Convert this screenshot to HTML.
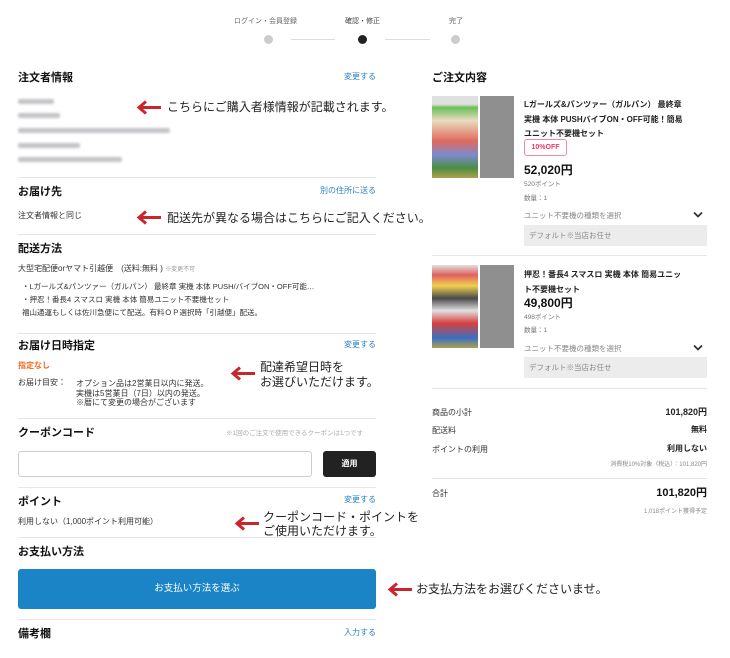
<!DOCTYPE html>
<html><head><meta charset="utf-8"><style>
*{margin:0;padding:0;box-sizing:border-box}
body{width:730px;height:658px;background:#fff;position:relative;overflow:hidden;font-family:"Liberation Sans","Noto Sans CJK JP",sans-serif;color:#222}
.t{position:absolute;white-space:nowrap;line-height:1}
.h{font-size:11px;font-weight:bold;color:#111}
.s{font-size:8px;color:#333}
.lk{font-size:8px;color:#2a80c4}
.r{text-align:right}
.hr{position:absolute;height:1px;background:#e6e6e6}
.ann{font-size:12px;color:#222;letter-spacing:0}
.blur{position:absolute;height:5px;background:#c4c4c8;filter:blur(1.2px);border-radius:2px}
.box{position:absolute;background:#ececec}
</style></head><body>
<div class="t" style="left:234px;top:18px;font-size:7px;color:#666">ログイン・会員登録</div>
<div class="t" style="left:345px;top:18px;font-size:7px;color:#444">確認・修正</div>
<div class="t" style="left:449px;top:18px;font-size:7px;color:#666">完了</div>
<div style="position:absolute;left:264px;top:35px;width:9px;height:9px;border-radius:50%;background:#ccc"></div>
<div style="position:absolute;left:358px;top:35px;width:9px;height:9px;border-radius:50%;background:#222"></div>
<div style="position:absolute;left:451px;top:35px;width:9px;height:9px;border-radius:50%;background:#ccc"></div>
<div class="hr" style="left:291px;top:39px;width:44px;background:#ddd"></div>
<div class="hr" style="left:385px;top:39px;width:45px;background:#ddd"></div>

<div class="t h" style="left:18px;top:73px">注文者情報</div>
<div class="t lk" style="left:344px;top:73px">変更する</div>
<div class="blur" style="left:18px;top:99px;width:36px"></div>
<div class="blur" style="left:18px;top:113px;width:42px"></div>
<div class="blur" style="left:18px;top:128px;width:152px"></div>
<div class="blur" style="left:18px;top:143px;width:62px"></div>
<div class="blur" style="left:18px;top:157px;width:104px"></div>

<svg style="position:absolute;left:136px;top:100px" width="26" height="15"><path d="M25 7.5H4M10 1.5L3 7.5L10 13.5" stroke="#c8262c" stroke-width="3" fill="none"/></svg>
<div class="t ann" style="left:167px;top:101px">こちらにご購入者様情報が記載されます。</div>

<div class="hr" style="left:18px;top:177px;width:358px"></div>
<div class="t h" style="left:18px;top:187px">お届け先</div>
<div class="t lk" style="left:320px;top:187px">別の住所に送る</div>
<div class="t s" style="left:18px;top:212px">注文者情報と同じ</div>
<svg style="position:absolute;left:136px;top:210px" width="26" height="15"><path d="M25 7.5H4M10 1.5L3 7.5L10 13.5" stroke="#c8262c" stroke-width="3" fill="none"/></svg>
<div class="t ann" style="left:167px;top:212px">配送先が異なる場合はこちらにご記入ください。</div>

<div class="hr" style="left:18px;top:234px;width:358px"></div>
<div class="t h" style="left:18px;top:244px">配送方法</div>
<div class="t s" style="left:18px;top:265px">大型宅配便orヤマト引越便　(送料:無料 ) <span style="font-size:6px;color:#999">※変更不可</span></div>
<div class="t" style="left:22px;top:283px;font-size:7.5px;color:#333">・Lガールズ&amp;パンツァー（ガルパン） 最終章 実機 本体 PUSH/バイブON・OFF可能…</div>
<div class="t" style="left:22px;top:296px;font-size:7.5px;color:#333">・押忍！番長4 スマスロ 実機 本体 簡易ユニット不要機セット</div>
<div class="t" style="left:22px;top:309px;font-size:7.5px;color:#333">福山通運もしくは佐川急便にて配送。有料ＯＰ選択時「引越便」配送。</div>

<div class="hr" style="left:18px;top:333px;width:358px"></div>
<div class="t h" style="left:18px;top:341px">お届け日時指定</div>
<div class="t lk" style="left:344px;top:341px">変更する</div>
<div class="t" style="left:18px;top:362px;font-size:8px;color:#f06a1e;font-weight:bold">指定なし</div>
<div class="t s" style="left:18px;top:379px">お届け目安：</div>
<div class="t s" style="left:76px;top:379px;line-height:9.5px">オプション品は2営業日以内に発送。<br>実機は5営業日（7日）以内の発送。<br>※暦にて変更の場合がございます</div>
<svg style="position:absolute;left:230px;top:366px" width="26" height="15"><path d="M25 7.5H4M10 1.5L3 7.5L10 13.5" stroke="#c8262c" stroke-width="3" fill="none"/></svg>
<div class="t ann" style="left:260px;top:360px;line-height:15px">配達希望日時を<br>お選びいただけます。</div>

<div class="hr" style="left:18px;top:418px;width:358px"></div>
<div class="t h" style="left:18px;top:428px">クーポンコード</div>
<div class="t" style="left:226px;top:431px;font-size:6.5px;color:#aaa">※1回のご注文で使用できるクーポンは1つです</div>
<div style="position:absolute;left:18px;top:451px;width:294px;height:26px;border:1px solid #ccc;border-radius:3px"></div>
<div style="position:absolute;left:323px;top:451px;width:53px;height:26px;background:#222;border-radius:3px;color:#fff;font-size:8px;font-weight:bold;text-align:center;line-height:26px">適用</div>

<div class="hr" style="left:18px;top:487px;width:358px"></div>
<div class="t h" style="left:18px;top:497px">ポイント</div>
<div class="t lk" style="left:344px;top:496px">変更する</div>
<div class="t s" style="left:18px;top:518px">利用しない（1,000ポイント利用可能）</div>
<svg style="position:absolute;left:234px;top:516px" width="26" height="15"><path d="M25 7.5H4M10 1.5L3 7.5L10 13.5" stroke="#c8262c" stroke-width="3" fill="none"/></svg>
<div class="t ann" style="left:263px;top:510px;line-height:14px">クーポンコード・ポイントを<br>ご使用いただけます。</div>

<div class="hr" style="left:18px;top:537px;width:358px"></div>
<div class="t h" style="left:18px;top:547px">お支払い方法</div>
<div style="position:absolute;left:18px;top:569px;width:358px;height:40px;background:#1a84c6;border-radius:3px;color:#fff;font-size:9.5px;text-align:center;line-height:40px">お支払い方法を選ぶ</div>
<svg style="position:absolute;left:387px;top:582px" width="26" height="15"><path d="M25 7.5H4M10 1.5L3 7.5L10 13.5" stroke="#c8262c" stroke-width="3" fill="none"/></svg>
<div class="t ann" style="left:416px;top:583px">お支払方法をお選びくださいませ。</div>

<div class="hr" style="left:18px;top:619px;width:358px"></div>
<div class="t h" style="left:18px;top:629px">備考欄</div>
<div class="t lk" style="left:344px;top:629px">入力する</div>

<div class="t h" style="left:432px;top:73px">ご注文内容</div>

<div style="position:absolute;left:432px;top:96px;width:46px;height:82px;background:linear-gradient(#e0e0e0 0,#e0e0e0 10%,#6bbf5a 14%,#e8dcc0 30%,#e06a5c 55%,#7c8bd0 72%,#4a8d40 88%,#b0a050 100%)"></div>
<div style="position:absolute;left:480px;top:96px;width:34px;height:82px;background:#8f8f8f"></div>
<div class="t" style="left:524px;top:98px;font-size:8px;font-weight:bold;line-height:14.5px;color:#222">Lガールズ&amp;パンツァー（ガルパン） 最終章<br>実機 本体 PUSHバイブON・OFF可能！簡易<br>ユニット不要機セット</div>
<div style="position:absolute;left:524px;top:139px;width:43px;height:17px;border:1px solid #f08aa0;border-radius:3px;color:#e8386a;font-size:7px;font-weight:bold;text-align:center;line-height:15px">10%OFF</div>
<div class="t" style="left:524px;top:164px;font-size:12px;font-weight:bold;color:#111">52,020円</div>
<div class="t" style="left:524px;top:182px;font-size:6.5px;color:#777">520ポイント</div>
<div class="t" style="left:524px;top:196px;font-size:6.5px;color:#777">数量：1</div>
<div class="t" style="left:524px;top:212px;font-size:7.5px;color:#888">ユニット不要機の種類を選択</div>
<svg style="position:absolute;left:693px;top:211px" width="10" height="8"><path d="M1 1.5L5 5.5L9 1.5" stroke="#333" stroke-width="1.8" fill="none"/></svg>
<div class="box" style="left:524px;top:225px;width:183px;height:21px"></div>
<div class="t" style="left:529px;top:232px;font-size:7.5px;color:#888">デフォルト※当店お任せ</div>

<div class="hr" style="left:432px;top:255px;width:275px"></div>

<div style="position:absolute;left:432px;top:265px;width:46px;height:83px;background:linear-gradient(#e0e0e0 0,#e06060 12%,#f0d050 25%,#4a4a4a 40%,#e0e0e0 55%,#d84040 70%,#3a70c0 88%,#b0a050 100%)"></div>
<div style="position:absolute;left:480px;top:265px;width:34px;height:83px;background:#8f8f8f"></div>
<div class="t" style="left:524px;top:268px;font-size:8px;font-weight:bold;line-height:14.5px;color:#222">押忍！番長4 スマスロ 実機 本体 簡易ユニッ<br>ト不要機セット</div>
<div class="t" style="left:524px;top:297px;font-size:12px;font-weight:bold;color:#111">49,800円</div>
<div class="t" style="left:524px;top:315px;font-size:6.5px;color:#777">498ポイント</div>
<div class="t" style="left:524px;top:328px;font-size:6.5px;color:#777">数量：1</div>
<div class="t" style="left:524px;top:345px;font-size:7.5px;color:#888">ユニット不要機の種類を選択</div>
<svg style="position:absolute;left:693px;top:344px" width="10" height="8"><path d="M1 1.5L5 5.5L9 1.5" stroke="#333" stroke-width="1.8" fill="none"/></svg>
<div class="box" style="left:524px;top:357px;width:183px;height:21px"></div>
<div class="t" style="left:529px;top:364px;font-size:7.5px;color:#888">デフォルト※当店お任せ</div>

<div class="hr" style="left:432px;top:388px;width:275px"></div>
<div class="t s" style="left:432px;top:409px">商品の小計</div>
<div class="t r" style="right:23px;top:408px;font-size:9px;font-weight:bold">101,820円</div>
<div class="t s" style="left:432px;top:427px">配送料</div>
<div class="t r" style="right:23px;top:426px;font-size:8px;font-weight:bold">無料</div>
<div class="t s" style="left:432px;top:446px">ポイントの利用</div>
<div class="t r" style="right:23px;top:445px;font-size:8px;font-weight:bold">利用しない</div>
<div class="t r" style="right:23px;top:462px;font-size:6px;color:#888">消費税10%対象（税込）：101,820円</div>
<div class="hr" style="left:432px;top:478px;width:275px"></div>
<div class="t s" style="left:432px;top:490px">合計</div>
<div class="t r" style="right:23px;top:488px;font-size:11px;font-weight:bold;color:#111">101,820円</div>
<div class="t r" style="right:23px;top:509px;font-size:6px;color:#888">1,018ポイント獲得予定</div>
</body></html>
